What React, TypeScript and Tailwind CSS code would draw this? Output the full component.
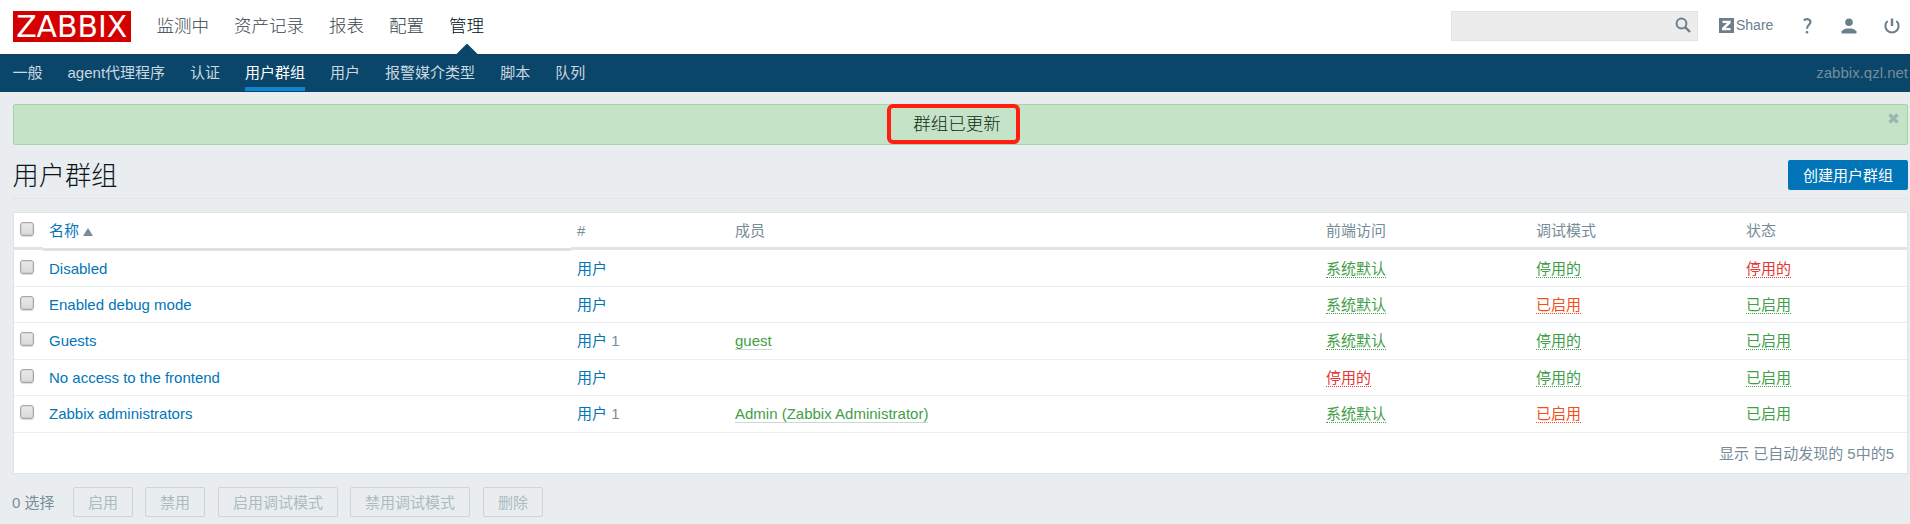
import React from "react";

const mainNav = ["监测中", "资产记录", "报表", "配置", "管理"];
const subNav = ["一般", "agent代理程序", "认证", "用户群组", "用户", "报警媒介类型", "脚本", "队列"];

type Tone = "green" | "red" | "orange" | "plain";
const tones: Record<Tone, string> = {
  green: "text-[#429e47] border-[#429e47]",
  red: "text-[#e33734] border-[#e33734]",
  orange: "text-[#f24f1d] border-[#f24f1d]",
  plain: "text-[#429e47] border-transparent",
};

type State = [string, Tone];
const def: State = ["系统默认", "green"];
const off: State = ["停用的", "green"];
const on: State = ["已启用", "green"];
const onStatic: State = ["已启用", "plain"];
const offRed: State = ["停用的", "red"];
const onWarn: State = ["已启用", "orange"];

const rows: { name: string; count?: number; member?: string; states: State[]; h: string }[] = [
  { name: "Disabled", states: [def, off, offRed], h: "h-[37px] pb-[8px]" },
  { name: "Enabled debug mode", states: [def, onWarn, on], h: "h-[36px] pb-[8px]" },
  { name: "Guests", count: 1, member: "guest", states: [def, off, on], h: "h-[37px] pb-[9px]" },
  { name: "No access to the frontend", states: [offRed, off, on], h: "h-[36px] pb-[8px]" },
  { name: "Zabbix administrators", count: 1, member: "Admin (Zabbix Administrator)", states: [def, onWarn, onStatic], h: "h-[37px] pb-[9px]" },
];

const cols = "grid grid-cols-[29px_528px_158px_591px_210px_210px_1fr]";

const actions = [
  { label: "启用", cls: "w-[60px] ml-[18px]" },
  { label: "禁用", cls: "w-[60px] ml-[12px]" },
  { label: "启用调试模式", cls: "w-[120px] ml-[13px]" },
  { label: "禁用调试模式", cls: "w-[120px] ml-[12px]" },
  { label: "删除", cls: "w-[60px] ml-[13px]" },
];

function Check() {
  return (
    <span className="block size-[14px] rounded-[3px] border border-[#a6a6a6] bg-linear-to-b from-[#e9e9e9] to-[#dadada] shadow-[0_1px_1px_rgba(0,0,0,0.15),inset_0_0_0_1px_rgba(0,0,0,0.06)]" />
  );
}

function Status({ value }: { value: State }) {
  return (
    <span className={`block h-[18px] border-b border-dotted leading-[18px] ${tones[value[1]]}`}>{value[0]}</span>
  );
}

export default function App() {
  return (
    <div className="flex h-[524px] w-[1910px] flex-col overflow-hidden bg-[#e9edf0] font-['Liberation_Sans','Noto_Sans_CJK_SC',sans-serif] text-[15px] leading-[18px] text-[#1f2c33]">
      <header className="flex h-[54px] shrink-0 items-start bg-white pl-[13px]">
        <div className="mt-[11px] h-[31px] w-[118px] bg-[#d40000]">
          <svg width="118" height="31" viewBox="0 0 118 31" className="overflow-visible">
            <text x="3.2" y="26.4" textLength="111" lengthAdjust="spacingAndGlyphs" fill="#fff" fontFamily="DejaVu Sans" fontSize="30">
              ZABBIX
            </text>
          </svg>
        </div>
        <nav className="ml-[25.5px] flex h-[54px] gap-[25px] text-[17.5px] font-light leading-[24px]">
          {mainNav.map((t) => (
            <a key={t} className={`flex h-full flex-col items-center justify-between pt-[14px] ${t === "管理" ? "text-[#000f18]" : "text-[#3a454d]"}`}>
              <span>{t}</span>
              {t === "管理" && (
                <svg width="22" height="10" viewBox="0 0 22 10">
                  <path d="M0 10.5 11 -.5 22 10.5z" fill="#0a466a" />
                </svg>
              )}
            </a>
          ))}
        </nav>
        <div className="ml-auto mt-[11px] flex h-[30px] w-[247px] justify-end border border-[#dfe4e7] bg-[#ececec] pr-[6px] pt-[5px]">
          <svg width="16" height="16" viewBox="0 0 16 16" fill="none" stroke="#6c808b">
            <circle cx="6.5" cy="6.5" r="4.9" strokeWidth="2" />
            <path d="M9.8 9.8 15 15" strokeWidth="2.4" />
          </svg>
        </div>
        <div className="ml-[21px] mt-[16px] flex w-[191px] items-center text-[#6c808b]">
          <svg width="15" height="15" viewBox="0 0 15 15" className="mt-px">
            <rect width="15" height="15" fill="#6c808b" />
            <path d="M3.5 2.8h8.2V5L6.7 9.900h4.800v2.300H3V10L8 5.100H3.500z" fill="#fff" />
          </svg>
          <span className="ml-[2px] text-[14px]">Share</span>
          <svg width="9" height="16" viewBox="0 0 9 16" className="ml-[30px] mt-px">
            <path d="M.8 2.400C3.200.6 7.400.6 7.400 4 7.400 6.800 4 6.800 4 10.800" fill="none" stroke="#6c808b" strokeWidth="2.200" />
            <rect x="2.700" y="13" width="2.600" height="2.600" rx="1" fill="#6c808b" />
          </svg>
          <svg width="16" height="16" viewBox="0 0 16 16" className="ml-[29px] mt-px" fill="#6c808b">
            <circle cx="8" cy="4.300" r="3.800" />
            <path d="M.5 15.500v-2C2 11 5 10.500 8 10.500s6 .5 7.500 3v2z" />
          </svg>
          <svg width="16" height="16" viewBox="0 0 16 16" className="ml-[27px] mt-px" fill="none" stroke="#6c808b" strokeWidth="2">
            <path d="M3.600 3A6.600 6.600 0 1 0 12.400 3" />
            <path d="M8 .5V8" strokeWidth="2.400" />
          </svg>
        </div>
      </header>

      <div className="flex h-[38px] shrink-0 items-start bg-[#0a466a] pl-[12.5px] pr-[2px] text-[#cbd8e0]">
        <nav className="flex gap-[25px]">
          {subNav.map((t) => (
            <a
              key={t}
              className={`h-[37px] pt-[10px] ${t === "用户群组" ? "border-b-4 border-[#0f85cf] text-white" : ""}`}
            >
              {t}
            </a>
          ))}
        </nav>
        <span className="ml-auto pt-[10px] text-[#768d99]">zabbix.qzl.net</span>
      </div>

      <main className="flex flex-col pl-[13px] pr-[2px]">
        <div className="relative mt-[12px] flex h-[41px] justify-center rounded-[2px] border border-[#a3d6a7] bg-[#c5e3c7] pr-[7px] text-[17.5px] font-light leading-[24px] text-[#0f2b15]">
          <span className="mt-[7px]">群组已更新</span>
          <div className="absolute left-[873px] top-[-1px] h-[40px] w-[133px] rounded-[6px] border-4 border-[#ff1e10]" />
          <svg width="11" height="11" viewBox="0 0 11 11" className="absolute right-[8px] top-[8px]">
            <path d="M1.500 1.500l8 8M9.500 1.500l-8 8" stroke="#9bb6ae" strokeWidth="3.400" />
          </svg>
        </div>

        <div className="flex h-[54px] items-start justify-between border-b border-[#dfe4e7]">
          <h1 className="-ml-[0.5px] mt-[13px] text-[26.25px] font-light leading-[36px] text-[#0b161c]">用户群组</h1>
          <button className="mt-[15px] h-[30px] w-[120px] rounded-[2px] bg-[#0275b8] pt-px leading-[29px] text-white">创建用户群组</button>
        </div>

        <section className="mt-[13px] flex h-[262px] flex-col border border-[#dfe4e7] bg-white">
          <div className={`${cols} h-[38px] items-start text-[#768d99]`}>
            <div className="h-[37px] border-b-3 border-[#dfe4e7] pl-[6px] pt-[9px]">
              <Check />
            </div>
            <div className="flex h-[38px] items-start border-b-3 border-[#dce2e6] pl-[6px] pt-[9px] text-[#0275b8]">
              名称
              <svg width="10" height="8" viewBox="0 0 10 8" className="ml-[4px] mt-[6px]">
                <path d="M0 8 5 0 10 8z" fill="#768d99" />
              </svg>
            </div>
            {["#", "成员", "前端访问", "调试模式", "状态"].map((t) => (
              <div key={t} className="h-[37px] border-b-3 border-[#dfe4e7] pl-[6px] pt-[9px]">
                {t}
              </div>
            ))}
          </div>
          <div className="-mt-px">
            {rows.map((r) => (
              <div key={r.name} className={`${cols} ${r.h} items-end border-b border-[#ebeef0]`}>
                <div className="self-end pb-[4px] pl-[6px]">
                  <Check />
                </div>
                <div className="pl-[6px] text-[#0275b8]">{r.name}</div>
                <div className="pl-[6px] text-[#768d99]">
                  <span className="text-[#0275b8]">用户</span>
                  {r.count ? ` ${r.count}` : ""}
                </div>
                <div className="flex pl-[6px]">
                  {r.member && (
                    <span className="block h-[18px] border-b border-[#ccd5d9] leading-[18px] text-[#429e47]">{r.member}</span>
                  )}
                </div>
                {r.states.map((s, i) => (
                  <div key={i} className="flex pl-[6px]">
                    <Status value={s} />
                  </div>
                ))}
              </div>
            ))}
          </div>
          <div className="pr-[13px] pt-[12px] text-right text-[#768d99]">显示 已自动发现的 5中的5</div>
        </section>

        <footer className="mt-[13px] flex h-[30px] items-center text-[#768d99]">
          <span className="-ml-px w-[43px] whitespace-nowrap pt-px">0 选择</span>
          {actions.map((a) => (
            <button key={a.label} className={`${a.cls} h-[30px] rounded-[2px] border border-[#ccd5d9] pt-px leading-[27px] text-[#acbbc2]`}>
              {a.label}
            </button>
          ))}
        </footer>
      </main>
    </div>
  );
}
